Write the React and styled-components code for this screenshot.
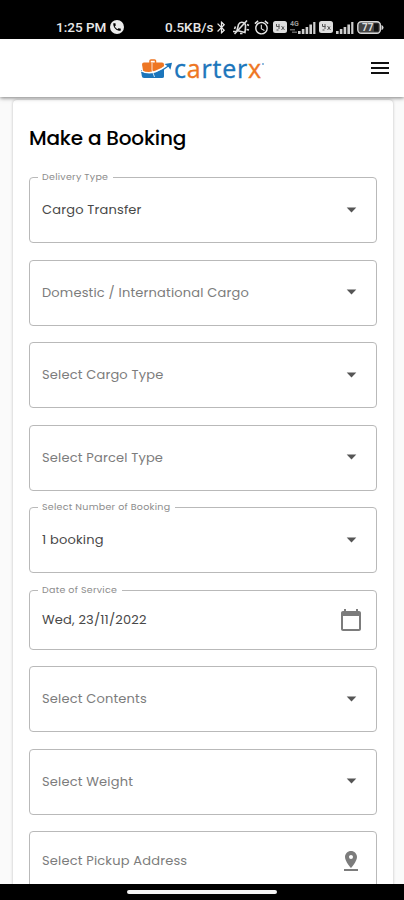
import React from 'react'
import styled, { createGlobalStyle } from 'styled-components'
import {
    MdAlarm,
    MdArrowDropDown,
    MdBluetooth,
    MdCalendarToday,
    MdMenu,
    MdPhone,
    MdPinDrop,
} from 'react-icons/md'


const GlobalStyle = createGlobalStyle`
    * {
        box-sizing: border-box;
    }
    body {
        margin: 0;
        background-color: #fafafa;
        font-family: Poppins, Inter, sans-serif;
    }
`

const Screen = styled.div`
    width: 404px;
    height: 900px;
    display: flex;
    flex-direction: column;
    overflow: hidden;
`

const StatusBar = styled.div`
    flex: none;
    height: 39px;
    padding: 14px 20px 0 56px;
    background-color: #000;
    color: #e8e8e8;

    display: flex;
    justify-content: space-between;
    font-family: Roboto, sans-serif;
    font-size: 13.5px;
    font-weight: 500;
`

const StatusGroup = styled.div`
    height: 26px;
    display: flex;
    align-items: center;
    gap: ${props => props.$gap || 0}px;

    svg {
        flex: none;
    }
`

const StatusText = styled.span`
    width: ${props => props.$width}px;
    white-space: nowrap;
`

const CallBadge = styled.span`
    width: 14px;
    height: 14px;
    border-radius: 50%;
    background-color: #ececec;
    color: #000;

    display: flex;
    align-items: center;
    justify-content: center;
`

const Header = styled.header`
    flex: none;
    position: relative;
    z-index: 1;
    height: 58px;
    padding: 0 12px 0 140px;
    background-color: #fff;
    box-shadow: 0 1px 4px rgba(0, 0, 0, .5);

    display: flex;
    align-items: center;
    justify-content: space-between;
`

const Logo = styled.div`
    display: flex;
    align-items: center;
    padding-top: 1px;
`

const LogoText = styled.span`
    margin-top: -2px;
    color: #1b75bb;
    font-family: 'Open Sans', sans-serif;
    font-size: 25px;
    font-weight: 500;
    line-height: 30px;
    letter-spacing: .8px;
    -webkit-text-stroke: .35px currentColor;
`

const LogoMark = styled.span`
    width: 2px;
    height: 2px;
    margin-top: -9px;
    border-radius: 50%;
    background-color: #6ba6d4;
`

const Orange = styled.span`
    color: #ee7623;
`

const Content = styled.main`
    flex: 1;
    min-height: 0;
    padding: 3px 11px 0 13px;
    overflow: hidden;
`

const Card = styled.section`
    height: 960px;
    padding: 22px 15px 0 16px;
    border-radius: 4px;
    background-color: #fff;
    box-shadow: 0 0 3px rgba(0, 0, 0, .25);
`

const Title = styled.h1`
    height: 32px;
    margin: 0 0 23px;
    color: #000;
    font-size: 20px;
    font-weight: 500;
    line-height: 33px;
    letter-spacing: -.18px;
    white-space: nowrap;
`

const Field = styled.div`
    position: relative;
    width: 348px;
    height: ${props => props.$height || 66}px;
    margin-bottom: 16.5px;
    padding: 0 13px 2px 12px;
    border: 1px solid #b9b9b9;
    border-radius: 4px;

    display: flex;
    align-items: center;
    justify-content: space-between;
`

const FieldLabel = styled.span`
    position: absolute;
    top: -8px;
    left: 8px;
    padding: 0 5px 0 4px;
    background-color: #fff;
    color: #8c8c8c;
    font-size: 9.5px;
    line-height: 14px;
    letter-spacing: .27px;
    white-space: nowrap;
`

const FieldText = styled.span`
    padding-top: 2px;
    color: ${props => (props.$filled ? '#484848' : '#7c7c7c')};
    font-size: 13px;
    line-height: 20px;
    letter-spacing: .17px;
    white-space: nowrap;
`

const FieldIcon = styled.span`
    width: 24px;
    height: 24px;
    padding-top: ${props => props.$drop || 0}px;
    color: ${props => props.$color || '#555'};

    display: flex;
    align-items: center;
    justify-content: center;

    svg {
        flex: none;
    }
`

const NavBar = styled.div`
    flex: none;
    position: relative;
    z-index: 1;
    height: 16px;
    background-color: #000;

    display: flex;
    align-items: center;
    justify-content: center;
`

const NavHandle = styled.div`
    width: 150px;
    height: 4px;
    border-radius: 2px;
    background-color: #f4f4f4;
`


const fields = [
    { label: 'Delivery Type', text: 'Cargo Transfer', filled: true },
    { text: 'Domestic / International Cargo' },
    { text: 'Select Cargo Type' },
    { text: 'Select Parcel Type' },
    { label: 'Select Number of Booking', text: '1 booking', filled: true },
    { label: 'Date of Service', text: 'Wed, 23/11/2022', filled: true, icon: 'date', height: 60 },
    { text: 'Select Contents' },
    { text: 'Select Weight' },
    { text: 'Select Pickup Address', icon: 'pin', height: 60 },
]


function MutedBell() {
    return (
        <svg width="18" height="16" viewBox="0 0 18 16" fill="none" stroke="#dedede" strokeWidth="1.600">
            <path d="M5 11.500l1.500-6Q8 2.500 11 3.500q3 1 2.500 4.500l-.5 5.500z" />
            <path d="M2.500 10l1-2.500M1 12.500h3M15 5.500l2 1M14.500 10.500l2.500 .5M8 14.500h2.500" />
            <path d="M2.500 15L15 1.500" />
        </svg>
    )
}

function SignalBars({ network }) {
    return (
        <svg width={network ? 26 : 18} height="14" viewBox={network ? '-8 -2 26 14' : '0 -2 18 14'} fill="#cfcfcf">
            {network && <text x="-8" y="3.5" fill="#999" fontFamily="Roboto" fontSize="7" fontWeight="700">4G</text>}
            {network && <path d="M-8 7h5v1.500h-5zM-6 9.500h5V11h-5z" fill="#666" />}
            <rect x="0" y="9" width="2.6" height="3" />
            <rect x="3.8" y="7" width="2.6" height="5" />
            <rect x="7.6" y="5" width="2.6" height="7" />
            <rect x="11.4" y="2.5" width="2.6" height="9.5" />
            <rect x="15.2" y="0" width="2.2" height="12" />
        </svg>
    )
}

function SimCard() {
    return (
        <svg width="14" height="12" viewBox="0 0 14 12">
            <rect width="14" height="12" rx="2.5" fill="#dedede" />
            <path d="M3.5 3v2.5h3M6 3v5M8.5 5l3 4M11 5.5l-2.5 3.5M3.5 9h2" fill="none" stroke="#555" strokeWidth="1" />
        </svg>
    )
}

function Battery() {
    return (
        <svg width="27" height="13" viewBox="0 0 27 13">
            <rect x=".8" y=".8" width="22.6" height="11.4" rx="3.5" fill="#444" stroke="#d8d8d8" strokeWidth="1.4" />
            <rect x="17" y="2.500" width="4.500" height="8" fill="#111" />
            <path d="M24.5 4q2 .5 2 2.5t-2 2.5z" fill="#d8d8d8" />
            <text x="5" y="10.2" fill="#ddd" fontFamily="Roboto" fontSize="10" fontWeight="700">77</text>
        </svg>
    )
}

function Suitcase() {
    return (
        <svg width="34" height="20" viewBox="0 0 34 20">
            <path d="M10 4V1.800Q10 1 11 1h3.500q1 0 1 .8V4" fill="none" stroke="#ee7623" strokeWidth="1.500" />
            <path d="M4 3.500h18q2 0 2 2v5l-2 4H3.500L2 5.500q0-2 2-2z" fill="#ee7623" />
            <path d="M1 11q5 4 12 2.500 6-1 11-5v9q0 1.500-2 1.500H4q-2 0-2.200-2z" fill="#1b75bb" />
            <path d="M1.500 12q6 3.500 14 .8Q22 10.500 28 5.500" fill="none" stroke="#fff" strokeWidth="2" />
            <path d="M1.500 13.500q7 3 14.500 .5Q23 11.500 29 6.500" fill="none" stroke="#1b75bb" strokeWidth="1.100" />
            <path d="M24.500 5l7.500-1.300-1.600 7-2-3z" fill="#1b75bb" />
            <path d="M12 4v7l2.500 7" fill="none" stroke="#fff" strokeWidth=".8" />
        </svg>
    )
}

function EndIcon({ type }) {
    if (type === 'date') {
        return <FieldIcon $color="#7c7c7c" $drop={2}><MdCalendarToday size={24} /></FieldIcon>
    }
    if (type === 'pin') {
        return <FieldIcon $color="#7c7c7c" $drop={1}><MdPinDrop size={24} /></FieldIcon>
    }
    return <FieldIcon><MdArrowDropDown size={23} /></FieldIcon>
}

function App() {
    return (
        <Screen>
            <GlobalStyle />

            {/* phone status bar */}
            <StatusBar>
                <StatusGroup>
                    <StatusText $width={54}>1:25 PM</StatusText>
                    <CallBadge><MdPhone size={10} /></CallBadge>
                </StatusGroup>
                <StatusGroup $gap={3}>
                    <StatusText $width={46}>0.5KB/s</StatusText>
                    <MdBluetooth size={15} />
                    <MutedBell />
                    <MdAlarm size={17} />
                    <SimCard />
                    <SignalBars network />
                    <SimCard />
                    <SignalBars />
                    <Battery />
                </StatusGroup>
            </StatusBar>

            <Header>
                <Logo>
                    <Suitcase />
                    <LogoText>c<Orange>a</Orange>rter<Orange>x</Orange></LogoText>
                    <LogoMark />
                </Logo>
                <MdMenu size={24} color="#111" />
            </Header>

            {/* booking form */}
            <Content>
                <Card>
                    <Title>Make a Booking</Title>
                    {fields.map(field => (
                        <Field key={field.text} $height={field.height}>
                            {field.label && <FieldLabel>{field.label}</FieldLabel>}
                            <FieldText $filled={field.filled}>{field.text}</FieldText>
                            <EndIcon type={field.icon} />
                        </Field>
                    ))}
                </Card>
            </Content>

            <NavBar>
                <NavHandle />
            </NavBar>
        </Screen>
    )
}

export default App
